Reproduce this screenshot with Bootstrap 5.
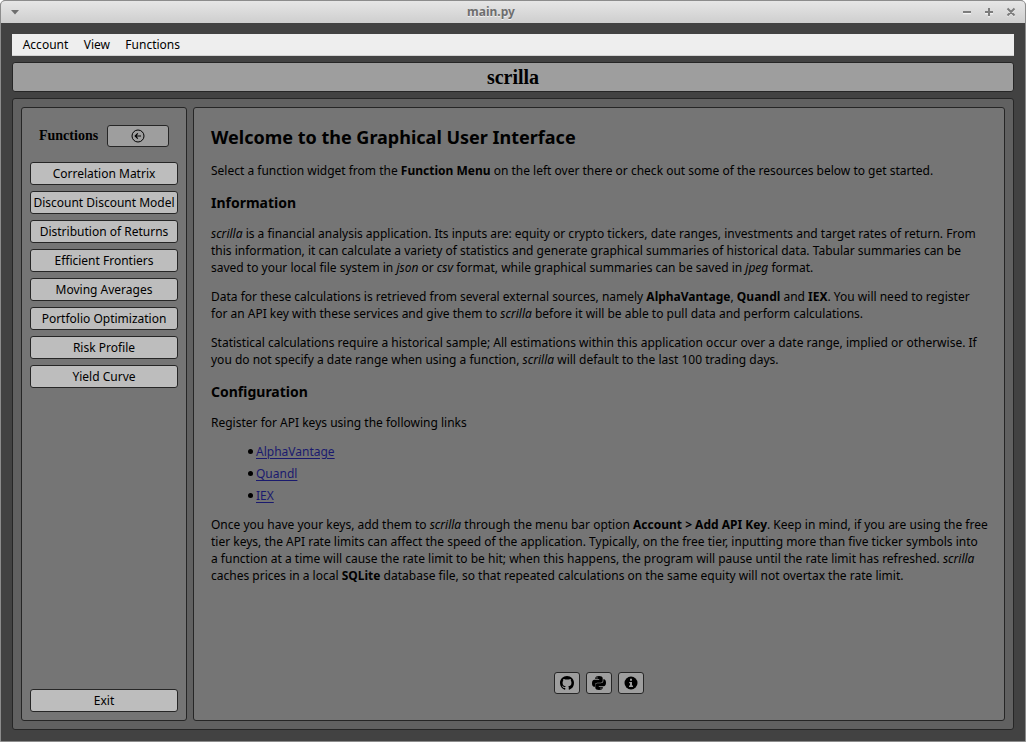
<!DOCTYPE html>
<html lang="en">
<head>
<meta charset="utf-8">
<meta name="viewport" content="width=device-width, initial-scale=1">
<title>main.py</title>
<link rel="stylesheet" href="https://cdn.jsdelivr.net/npm/bootstrap@5.3.0/dist/css/bootstrap.min.css">
<style>
  body { font: 12px/17px "Noto Sans", sans-serif; color: #000; background: #fff; }
  .window { height: 742px; border: 1px solid #8c8c8c; border-radius: 5px 5px 0 0; background: #424242; }
  .titlebar { height: 22px; padding: 0 9px 0 9px; background: linear-gradient(#e6e6e6, #cecece); border-radius: 4px 4px 0 0; }
  .titlebar .caption { color: #6e6e6e; text-shadow: 0 1px #f0f0f0; font-weight: 700; line-height: 24px; }
  .work { padding: 11px; }
  .menubar { height: 22px; background: #eee; border-bottom: 1px solid #d2d2d2; padding: 0 3px; }
  .menubar .nav-link { color: #000; padding: 2px 7.7px; line-height: 17px; }
  .frame { border: 1px solid #262626; border-radius: 3px; }
  .banner { height: 30px; margin-top: 6px; background: #9e9e9e; font: 700 20px/28px "Liberation Serif", serif; }
  .deck { margin-top: 6px; height: 632px; background: #616161; padding: 8px; gap: 6px; }
  .pane { background: #757575; }
  .side { width: 166px; flex: none; padding: 17px 8px 8px; }
  .side-title { font: 700 14px/22px "Liberation Serif", serif; }
  .side-head { margin-bottom: 15px; }
  .tool { border: 1px solid #262626; border-radius: 3px; background: #bdbdbd; color: #000; font-size: 12px; line-height: 17px; padding: 2px 0; height: 23px; white-space: nowrap; }
  .tool-list { gap: 6px; }
  .tool-dim { background: #9e9e9e; height: 22px; padding: 0; }
  .tool-back { width: 62px; margin-left: 9px; }
  .main { padding: 17px; min-width: 0; }
  .main h2 { font-size: 18px; line-height: 25px; font-weight: 700; margin: 0 0 12px; }
  .main h3 { font-size: 14px; line-height: 19px; font-weight: 700; margin: 14px 0 13px; }
  .main p { margin: 0 0 12px; white-space: nowrap; }
  .main ul { margin: 0 0 12px; padding-left: 36px; gap: 5px; list-style: none; }
  .main li::before { content: ""; display: inline-block; width: 5px; height: 5px; margin: 0 3px 3px 1px; border-radius: 50%; background: #000; vertical-align: middle; }
  .main a { color: #1a1a6e; text-underline-offset: 2px; }
  .main .tool { width: 26px; }
  .resources { gap: 6px; margin-bottom: 9px; }
</style>
</head>
<body>
<div class="window">
  <header class="titlebar d-flex align-items-center justify-content-between position-relative">
    <svg width="10" height="6" viewBox="0 0 10 6"><path d="M1 1h8L5 5.5z" fill="#6e6e6e"/></svg>
    <span class="caption position-absolute start-50 translate-middle-x" style="margin-left:-22px">main.py</span>
    <svg width="56" height="12" viewBox="0 0 56 12" fill="none" stroke-width="2">
      <path d="M3 7.500h8M25 7.500h8M29 3.500v8M47.500 3.500l7 7m0-7l-7 7" stroke="#f2f2f2" stroke-width="1.500"/>
      <path d="M3 6h8M25 6h8M29 2v8M47.500 2.500l7 7m0-7l-7 7" stroke="#7c7c7c"/>
    </svg>
  </header>
  <div class="work">
    <nav class="menubar nav">
      <a class="nav-link" href="#">Account</a>
      <a class="nav-link" href="#">View</a>
      <a class="nav-link" href="#">Functions</a>
    </nav>
    <div class="frame banner text-center">scrilla</div>
    <div class="frame deck d-flex">
      <aside class="frame pane side d-flex flex-column">
        <div class="side-head d-flex align-items-center ps-2">
          <span class="side-title ps-1" style="margin-left:-3px">Functions</span>
          <button class="btn tool tool-dim tool-back d-flex align-items-center justify-content-center" aria-label="Collapse">
            <svg width="14" height="14" viewBox="0 0 14 14" fill="none" stroke="#000"><circle cx="7" cy="7" r="6"/><path d="M10 7H4.500M6.800 4.300L4.200 7l2.600 2.700" stroke-width="1.200"/></svg>
          </button>
        </div>
        <div class="d-grid tool-list">
          <button class="btn tool">Correlation Matrix</button>
          <button class="btn tool">Discount Discount Model</button>
          <button class="btn tool">Distribution of Returns</button>
          <button class="btn tool">Efficient Frontiers</button>
          <button class="btn tool">Moving Averages</button>
          <button class="btn tool">Portfolio Optimization</button>
          <button class="btn tool">Risk Profile</button>
          <button class="btn tool">Yield Curve</button>
        </div>
        <button class="btn tool mt-auto">Exit</button>
      </aside>
      <main class="frame pane main flex-fill d-flex flex-column">
        <h2>Welcome to the Graphical User Interface</h2>
        <p class="mb-0">Select a function widget from the <b>Function Menu</b> on the left over there or check out some of the resources below to get started.</p>
        <h3>Information</h3>
        <p><i>scrilla</i> is a financial analysis application. Its inputs are: equity or crypto tickers, date ranges, investments and target rates of return. From<br>this information, it can calculate a variety of statistics and generate graphical summaries of historical data. Tabular summaries can be<br>saved to your local file system in <i>json</i> or <i>csv</i> format, while graphical summaries can be saved in <i>jpeg</i> format.</p>
        <p>Data for these calculations is retrieved from several external sources, namely <b>AlphaVantage</b>, <b>Quandl</b> and <b>IEX</b>. You will need to register<br>for an API key with these services and give them to <i>scrilla</i> before it will be able to pull data and perform calculations.</p>
        <p class="mb-0">Statistical calculations require a historical sample; All estimations within this application occur over a date range, implied or otherwise. If<br>you do not specify a date range when using a function, <i>scrilla</i> will default to the last 100 trading days.</p>
        <h3>Configuration</h3>
        <p>Register for API keys using the following links</p>
        <ul class="d-grid">
          <li><a href="#">AlphaVantage</a></li>
          <li><a href="#">Quandl</a></li>
          <li><a href="#">IEX</a></li>
        </ul>
        <p>Once you have your keys, add them to <i>scrilla</i> through the menu bar option <b>Account &gt; Add API Key</b>. Keep in mind, if you are using the free<br>tier keys, the API rate limits can affect the speed of the application. Typically, on the free tier, inputting more than five ticker symbols into<br>a function at a time will cause the rate limit to be hit; when this happens, the program will pause until the rate limit has refreshed. <i>scrilla</i><br>caches prices in a local <b>SQLite</b> database file, so that repeated calculations on the same equity will not overtax the rate limit.</p>
        <div class="resources d-flex justify-content-center mt-auto">
          <button class="btn tool tool-dim d-flex align-items-center justify-content-center" aria-label="GitHub">
            <svg width="14" height="14" viewBox="0 0 16 16"><path d="M8 0C3.580 0 0 3.580 0 8c0 3.540 2.290 6.530 5.470 7.590.4.070.55-.17.55-.38 0-.19-.01-.82-.01-1.490-2.010.37-2.530-.49-2.690-.94-.09-.23-.48-.94-.82-1.130-.28-.15-.68-.52-.01-.53.63-.01 1.080.58 1.230.82.72 1.210 1.870.87 2.330.66.07-.52.28-.87.51-1.070-1.780-.2-3.640-.89-3.640-3.950 0-.87.31-1.590.82-2.150-.08-.2-.36-1.020.08-2.120 0 0 .67-.21 2.200.82.64-.18 1.320-.27 2-.27s1.360.09 2 .27c1.530-1.040 2.200-.82 2.200-.82.44 1.100.16 1.920.08 2.120.51.56.82 1.270.82 2.150 0 3.070-1.870 3.750-3.650 3.950.29.25.54.73.54 1.480 0 1.070-.01 1.930-.01 2.200 0 .21.15.46.55.38A8.010 8.010 0 0 0 16 8c0-4.420-3.580-8-8-8z"/></svg>
          </button>
          <button class="btn tool tool-dim d-flex align-items-center justify-content-center" aria-label="Python">
            <svg width="14" height="14" viewBox="0 0 14 14">
              <path d="M3.300 2.200C3.300.7 5 0 7 0s3.700.7 3.700 2.200v2.600c0 1.200-.9 1.900-2 1.900H5.300C4 6.700 3.100 7.500 3.100 8.700v2H2.200C.7 10.700 0 9.200 0 7.200s.9-3.500 2.400-3.500h4.800v-.6H3.300z"/>
              <path d="M10.700 11.800c0 1.500-1.700 2.200-3.700 2.200s-3.700-.7-3.700-2.200V9.200c0-1.200.9-1.900 2-1.900h3.400c1.300 0 2.600-.8 2.600-2v-2h.5c1.500 0 2.200 1.500 2.200 3.500s-.9 3.500-2.400 3.500H6.800v.6h3.900z"/>
              <circle cx="5" cy="1.900" r=".6" fill="#9e9e9e"/><circle cx="9" cy="12.100" r=".6" fill="#9e9e9e"/>
            </svg>
          </button>
          <button class="btn tool tool-dim d-flex align-items-center justify-content-center" aria-label="About">
            <svg width="14" height="14" viewBox="0 0 14 14"><circle cx="7" cy="7" r="6.500"/><path d="M6 2.700h2v2H6zM5.200 6H8v3.500h1V11H5V9.500h1V7.200h-.8z" fill="#9e9e9e"/></svg>
          </button>
        </div>
      </main>
    </div>
  </div>
</div>
<script src="https://cdn.jsdelivr.net/npm/bootstrap@5.3.0/dist/js/bootstrap.bundle.min.js"></script>
</body>
</html>
